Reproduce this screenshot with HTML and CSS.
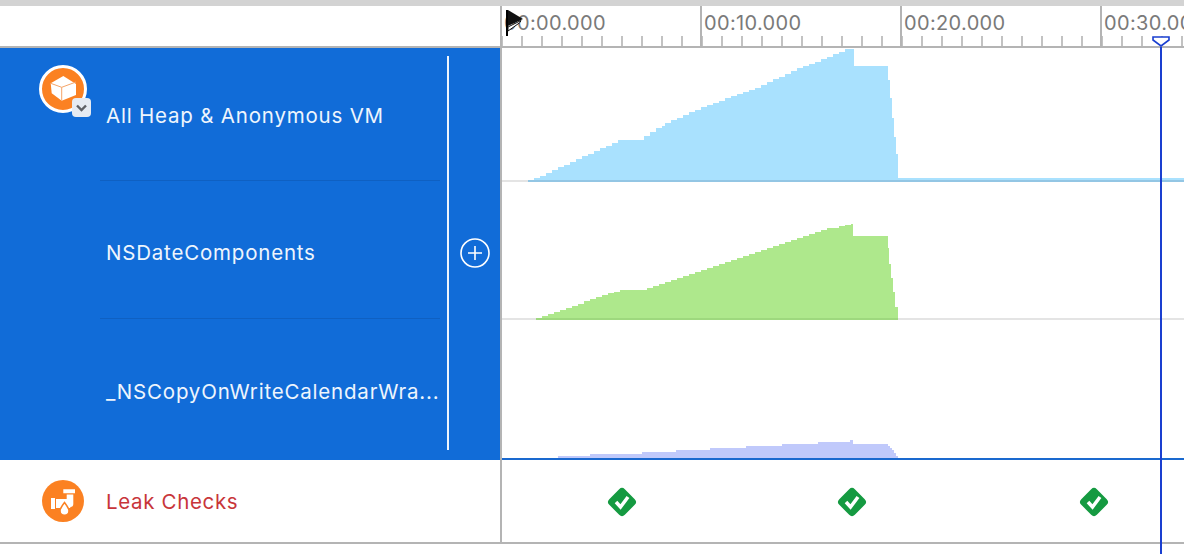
FILE: index.html
```html
<!DOCTYPE html>
<html lang="en">
<head>
<meta charset="utf-8">
<title>Instruments Allocations</title>
<link rel="stylesheet" href="styles.css">
</head>
<body>
<div class="app">
  <div class="topbar"></div>
  <div class="ruler-row">
    <div class="ruler-side"></div>
    <div class="ruler">
      <div class="major">00:00.000</div>
      <div class="major">00:10.000</div>
      <div class="major">00:20.000</div>
      <div class="major">00:30.000</div>
    </div>
  </div>
  <div class="group">
    <div class="labels">
      <div class="label-list">
        <div class="label-row first">
          <span class="label-text">All Heap &amp; Anonymous VM</span>
        </div>
        <div class="label-row second">
          <span class="label-text">NSDateComponents</span>
        </div>
        <div class="label-row third">
          <span class="label-text">_NSCopyOnWriteCalendarWra...</span>
        </div>
      </div>
      <div class="add-col">
        <svg class="add-icon" viewBox="0 0 30 30"><circle cx="15" cy="15" r="14" fill="none" stroke="#fff" stroke-width="1.6"/><path d="M15 8v14M8 15h14" stroke="#fff" stroke-width="1.6"/></svg>
      </div>
      <div class="instrument">
        <svg class="instrument-icon" viewBox="0 0 48 48"><circle cx="24" cy="24" r="22.5" fill="#fb8122" stroke="#fff" stroke-width="3"/><path d="M24.300 11L37 19V30L22.700 35.700 12.700 28.300 11.700 18.300z" fill="#fff"/><path d="M11.700 18.300L22.700 22.300 37 17M22.700 22.300V35.700" fill="none" stroke="#f5a468" stroke-width="1"/></svg>
        <span class="chevron-badge"><svg viewBox="0 0 19 19"><path d="M5 7.500l4.500 4.500L14 7.500" fill="none" stroke="#5f6166" stroke-width="2.400"/></svg></span>
      </div>
    </div>
    <div class="charts">
      <div class="chart chart-a">
        <svg class="plot" viewBox="502 48 682 134" shape-rendering="crispEdges"><path fill="#a9e1fe" d="M528 181V180H534V178H540V176H546V173H552V170H558V167H564V165H570V162H576V159H582V156H588V154H594V151H600V148H606V146H612V143H618V140H644V136H650V132H656V128H662V126H665V123H671V120H677V118H683V115H689V112H695V110H701V107H707V105H713V103H719V101H725V98H731V96H737V94H743V92H749V90H755V88H761V85H767V82H773V79H779V77H785V74H791V71H797V68H803V66H809V64H815V62H821V59H827V57H833V54H839V52H845V49H851V49H854V66H888V80H890V98H892V118H894V137H896V154H898V178H1184V181Z"/><rect class="base-blue" x="528" y="180" width="656" height="2"/></svg>
      </div>
      <div class="chart chart-b">
        <svg class="plot" viewBox="502 182 682 138" shape-rendering="crispEdges"><path fill="#aee88c" d="M536 319V318H542V316H548V314H554V312H560V310H566V308H572V306H578V304H584V301H590V299H596V297H602V295H608V293H614V292H620V290H647V288H653V286H659V284H665V282H671V280H677V278H683V276H689V274H695V272H701V270H707V268H713V266H719V264H725V262H731V260H737V258H743V256H749V254H755V252H761V250H767V248H773V246H779V244H785V242H791V240H797V238H803V236H809V234H815V232H821V230H827V228H839V226H845V225H851V224H853V236H888V248H889V264H891V278H893V292H895V307H898V319Z"/><rect class="base-green" x="536" y="318" width="362" height="2"/></svg>
      </div>
      <div class="chart chart-c">
        <svg class="plot" viewBox="502 320 682 138" shape-rendering="crispEdges"><path fill="#c0c9fb" d="M558 458V456H590V454H642V452H676V450H710V448H746V446H782V444H818V442H850V440H853V444H888V446H890V448H892V450H894V453H896V456H898V458Z"/></svg>
      </div>
    </div>
  </div>
  <div class="leak-row">
    <div class="leak-label">
      <svg class="leak-icon" viewBox="0 0 42 42"><circle cx="21" cy="21" r="21" fill="#fb8122"/><path d="M21.300 9.300H33V13.300H21.300zM9 18H13V29H9zM14 19H24.700V14.500H31.300V24A3 3 0 0 1 28.300 27V28H14z" fill="#fff"/><path d="M22.500 22.500c2.800 3.800 4.500 6 4.500 8.200a4.500 4.500 0 0 1-9 0c0-2.200 1.700-4.400 4.500-8.200z" fill="#fff" stroke="#fb8122" stroke-width="1.500"/></svg>
      <span class="leak-text">Leak Checks</span>
    </div>
    <div class="leak-track">
      <svg class="check check-1" viewBox="0 0 30 30"><rect x="4" y="4" width="22" height="22" rx="4" transform="rotate(45 15 15)" fill="#159a41"/><path d="M9 15l4.500 5 7.500-10" fill="none" stroke="#fff" stroke-width="3.500"/></svg>
      <svg class="check check-2" viewBox="0 0 30 30"><rect x="4" y="4" width="22" height="22" rx="4" transform="rotate(45 15 15)" fill="#159a41"/><path d="M9 15l4.500 5 7.500-10" fill="none" stroke="#fff" stroke-width="3.500"/></svg>
      <svg class="check check-3" viewBox="0 0 30 30"><rect x="4" y="4" width="22" height="22" rx="4" transform="rotate(45 15 15)" fill="#159a41"/><path d="M9 15l4.500 5 7.500-10" fill="none" stroke="#fff" stroke-width="3.500"/></svg>
    </div>
  </div>
  <svg class="flag" viewBox="0 0 18 27"><path d="M1 0v26" stroke="#000" stroke-width="2" fill="none"/><path d="M2 0l15 9-15 7z" fill="#111"/><path d="M2 17l13-6.500-1 2L2 21z" fill="#fff" stroke="#111" stroke-width="1"/></svg>
  <div class="playhead">
    <svg class="playhead-cap" viewBox="0 0 18 11"><path d="M1 1h16v3l-8 6-8-6z" fill="#fff" stroke="#1a3fd0" stroke-width="1.600"/></svg>
    <div class="playhead-line"></div>
  </div>
</div>
</body>
</html>
```
FILE: styles.css
```css
* { box-sizing: border-box; }
html, body { margin: 0; padding: 0; background: #fff; }
body { font-family: Inter, "Liberation Sans", sans-serif; }
.app {
  position: relative;
  width: 1184px;
  height: 554px;
  overflow: hidden;
  display: flex;
  flex-direction: column;
}
.topbar { height: 6px; background: #d3d3d3; flex: none; }
.ruler-row {
  height: 42px;
  flex: none;
  display: flex;
  border-bottom: 2px solid #b4b4b4;
}
.ruler-side { width: 500px; flex: none; }
.ruler {
  flex: 1;
  display: flex;
  overflow: hidden;
  background-image: linear-gradient(to right, #c2c2c2 0, #c2c2c2 2px, transparent 2px);
  background-size: 20px 10px;
  background-position: 1px bottom;
  background-repeat: repeat-x;
}
.major {
  flex: none;
  width: 200px;
  height: 40px;
  padding: 5px 0 0 2px;
  border-left: 2px solid #b4b4b4;
  color: #7a7a7a;
  font-size: 20px;
  line-height: 24px;
  letter-spacing: .35px;
  white-space: nowrap;
}
.group { height: 412px; flex: none; display: flex; }
.labels {
  position: relative;
  width: 500px;
  flex: none;
  background: #116cd8;
  display: flex;
  color: #fff;
}
.label-list { width: 447px; flex: none; padding-left: 100px; display: flex; flex-direction: column; }
.label-row {
  display: flex;
  align-items: center;
  padding: 0 0 0 6px;
  border-bottom: 1px solid #0f60c2;
  margin-right: 7px;
}
.label-row.first { height: 133px; padding-top: 4px; }
.label-row.second { height: 138px; padding-top: 7px; }
.label-row.third { height: 141px; border-bottom: 0; padding-top: 4px; }
.label-text { font-size: 20.5px; line-height: 24px; letter-spacing: .8px; white-space: nowrap; color: #eef5fd; }
.add-col {
  width: 53px;
  flex: none;
  margin: 8px 0 10px;
  border-left: 2px solid #eef5fd;
  display: flex;
  align-items: center;
  justify-content: center;
}
.add-icon { width: 30px; height: 30px; display: block; }
.instrument { position: absolute; left: 39px; top: 17px; width: 52px; height: 52px; }
.instrument-icon { width: 48px; height: 48px; display: block; }
.chevron-badge {
  position: absolute;
  left: 33px;
  top: 33px;
  width: 19px;
  height: 19px;
  border-radius: 4px;
  background: #e6ebf2;
}
.chevron-badge svg { display: block; width: 19px; height: 19px; }
.charts {
  flex: 1;
  border-left: 2px solid #b4b4b4;
  display: flex;
  flex-direction: column;
}
.chart { flex: none; }
.chart-a { height: 134px; }
.chart-b { height: 138px; }
.chart-c { height: 140px; border-bottom: 2px solid #1a69cf; }
.plot { display: block; width: 682px; height: 100%; }
.chart-a, .chart-b { background: linear-gradient(#e4e4e4, #e4e4e4) bottom / 100% 2px no-repeat; }
.base-blue { fill: #93c6e4; }
.base-green { fill: #9ed87e; }
.leak-row {
  height: 84px;
  flex: none;
  display: flex;
  border-bottom: 2px solid #b4b4b4;
}
.leak-label { width: 500px; flex: none; display: flex; align-items: center; padding: 0 0 0 42px; gap: 22px; }
.leak-icon { width: 42px; height: 42px; display: block; }
.leak-text { font-size: 20.5px; line-height: 24px; letter-spacing: .65px; color: #c8353a; padding-top: 2px; }
.leak-track { position: relative; flex: 1; border-left: 2px solid #b4b4b4; }
.check { position: absolute; top: 27px; width: 30px; height: 30px; }
.check-1 { left: 105px; }
.check-2 { left: 335px; }
.check-3 { left: 577px; }
.flag { position: absolute; left: 506px; top: 10px; width: 18px; height: 27px; }
.playhead {
  position: absolute;
  left: 1152px;
  top: 36px;
  bottom: 0;
  width: 18px;
  display: flex;
  flex-direction: column;
  align-items: center;
}
.playhead-cap { width: 18px; height: 11px; flex: none; display: block; }
.playhead-line { width: 2px; flex: 1; background: #1a3fd0; }
```
